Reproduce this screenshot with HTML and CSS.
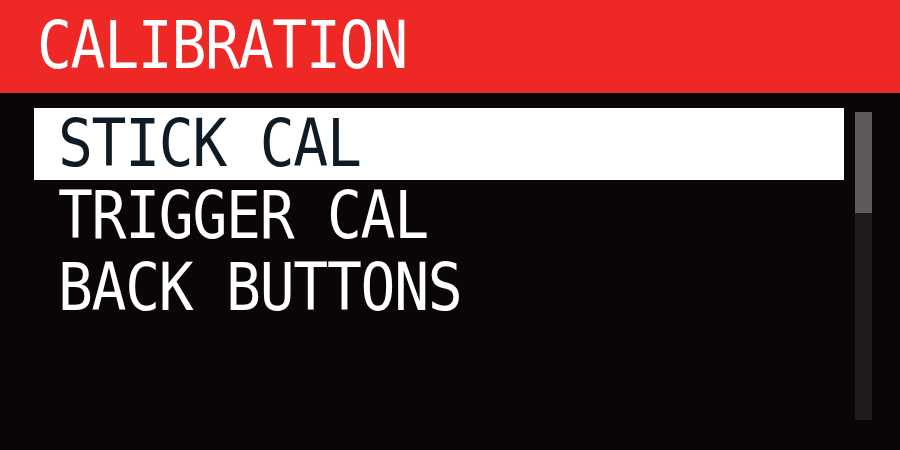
FILE: index.html
```html
<!DOCTYPE html>
<html>
<head>
<meta charset="utf-8">
<link rel="stylesheet" href="styles.css">
</head>
<body>
<div class="screen">
  <div class="header"><span class="title">CALIBRATION</span></div>
  <div class="body">
    <ul class="menu">
      <li class="item selected"><span class="label">STICK CAL</span></li>
      <li class="item"><span class="label">TRIGGER CAL</span></li>
      <li class="item"><span class="label">BACK BUTTONS</span></li>
    </ul>
    <div class="scroll"><div class="thumb"></div></div>
  </div>
</div>
</body>
</html>
```
FILE: styles.css
```css
html, body {
  margin: 0;
  padding: 0;
  background: #0a0608;
}
.screen {
  width: 900px;
  height: 450px;
  background: #0a0608;
  font-family: "DejaVu Sans Mono", "Liberation Mono", monospace;
  color: #ffffff;
  overflow: hidden;
}
.header {
  height: 93px;
  background: #ee2824;
  display: flex;
  align-items: center;
  padding-left: 37px;
  box-sizing: border-box;
}
.title {
  display: inline-block;
  font-size: 58px;
  letter-spacing: -1.3px;
  line-height: 93px;
  color: #fff;
  transform: scaleY(1.12);
}
.body {
  display: flex;
  padding-top: 15px;
}
.menu {
  list-style: none;
  margin: 0 0 0 34px;
  padding: 0;
  width: 810px;
}
.item {
  height: 72px;
  line-height: 72px;
  font-size: 58px;
  letter-spacing: -1.3px;
  padding-left: 24px;
  white-space: nowrap;
}
.label {
  display: inline-block;
  transform: scaleY(1.12);
}
.item.selected {
  background: #ffffff;
  color: #0e1a24;
}
.scroll {
  margin-left: 11px;
  margin-top: 4px;
  width: 17px;
  height: 308px;
  background: #1f1b1d;
}
.thumb {
  height: 101px;
  background: #5c5a5b;
}
```
